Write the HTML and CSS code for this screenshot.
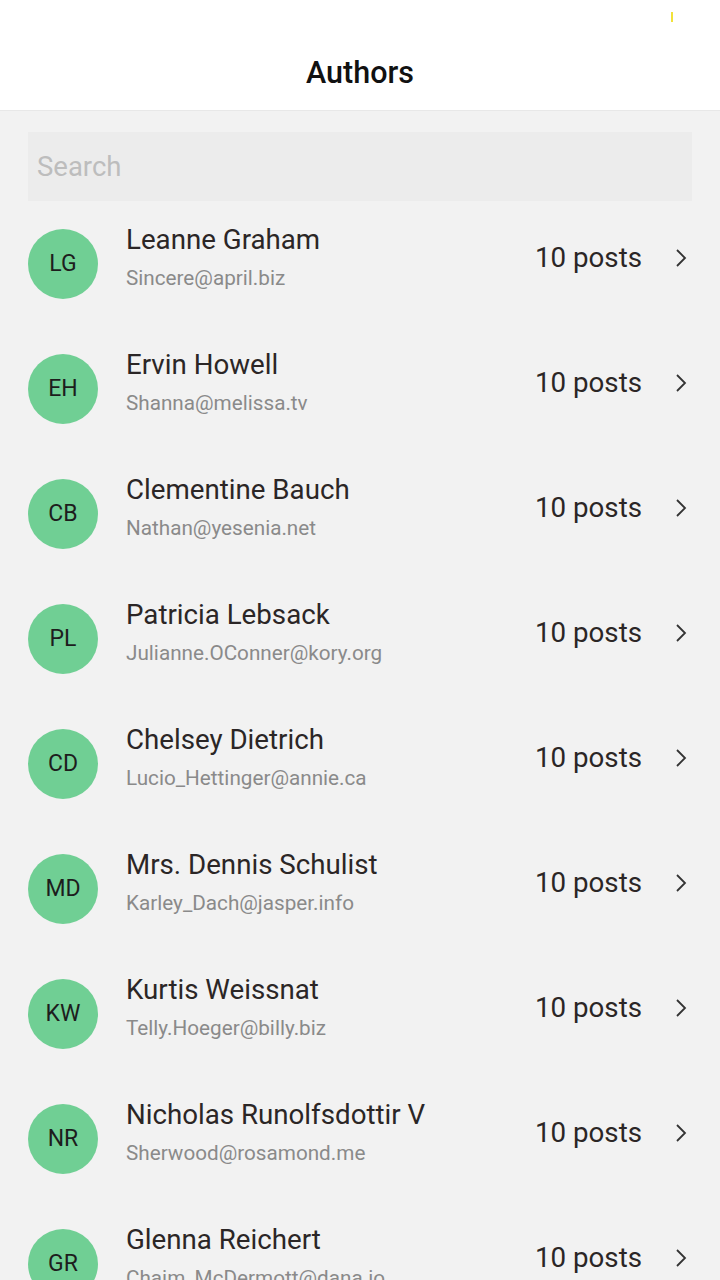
FILE: index.html
```html
<!DOCTYPE html>
<html>
<head>
<meta charset="utf-8">
<link rel="stylesheet" href="styles.css">
</head>
<body>
<div class="app">
  <header class="header">
    <span class="status-mark"></span>
    <h1 class="title">Authors</h1>
  </header>
  <main class="content">
    <div class="search"><span class="search-placeholder">Search</span></div>
    <ul class="list">
      <li class="row"><div class="avatar">LG</div><div class="info"><div class="name">Leanne Graham</div><div class="email">Sincere@april.biz</div></div><div class="posts">10 posts</div><svg class="chev" viewBox="0 0 14 20"><polyline points="3,2 11,10 3,18"/></svg></li>
      <li class="row"><div class="avatar">EH</div><div class="info"><div class="name">Ervin Howell</div><div class="email">Shanna@melissa.tv</div></div><div class="posts">10 posts</div><svg class="chev" viewBox="0 0 14 20"><polyline points="3,2 11,10 3,18"/></svg></li>
      <li class="row"><div class="avatar">CB</div><div class="info"><div class="name">Clementine Bauch</div><div class="email">Nathan@yesenia.net</div></div><div class="posts">10 posts</div><svg class="chev" viewBox="0 0 14 20"><polyline points="3,2 11,10 3,18"/></svg></li>
      <li class="row"><div class="avatar">PL</div><div class="info"><div class="name">Patricia Lebsack</div><div class="email">Julianne.OConner@kory.org</div></div><div class="posts">10 posts</div><svg class="chev" viewBox="0 0 14 20"><polyline points="3,2 11,10 3,18"/></svg></li>
      <li class="row"><div class="avatar">CD</div><div class="info"><div class="name">Chelsey Dietrich</div><div class="email">Lucio_Hettinger@annie.ca</div></div><div class="posts">10 posts</div><svg class="chev" viewBox="0 0 14 20"><polyline points="3,2 11,10 3,18"/></svg></li>
      <li class="row"><div class="avatar">MD</div><div class="info"><div class="name">Mrs. Dennis Schulist</div><div class="email">Karley_Dach@jasper.info</div></div><div class="posts">10 posts</div><svg class="chev" viewBox="0 0 14 20"><polyline points="3,2 11,10 3,18"/></svg></li>
      <li class="row"><div class="avatar">KW</div><div class="info"><div class="name">Kurtis Weissnat</div><div class="email">Telly.Hoeger@billy.biz</div></div><div class="posts">10 posts</div><svg class="chev" viewBox="0 0 14 20"><polyline points="3,2 11,10 3,18"/></svg></li>
      <li class="row"><div class="avatar">NR</div><div class="info"><div class="name">Nicholas Runolfsdottir V</div><div class="email">Sherwood@rosamond.me</div></div><div class="posts">10 posts</div><svg class="chev" viewBox="0 0 14 20"><polyline points="3,2 11,10 3,18"/></svg></li>
      <li class="row"><div class="avatar">GR</div><div class="info"><div class="name">Glenna Reichert</div><div class="email">Chaim_McDermott@dana.io</div></div><div class="posts">10 posts</div><svg class="chev" viewBox="0 0 14 20"><polyline points="3,2 11,10 3,18"/></svg></li>
    </ul>
  </main>
</div>
</body>
</html>
```
FILE: styles.css
```css
* { box-sizing: border-box; }
html, body { margin: 0; padding: 0; }
body {
  width: 720px;
  height: 1280px;
  overflow: hidden;
  background: #f2f2f2;
  font-family: Roboto, "Noto Sans", sans-serif;
}
.app { display: flex; flex-direction: column; }
.header {
  position: relative;
  height: 111px;
  background: #ffffff;
  border-bottom: 1px solid #e8e8e8;
  display: flex;
  align-items: flex-start;
  justify-content: center;
  padding-top: 53px;
}
.status-mark {
  position: absolute;
  left: 671px;
  top: 12px;
  width: 2px;
  height: 10px;
  background: #f2e23a;
}
.title {
  margin: 0;
  font-size: 30.5px;
  line-height: 40px;
  font-weight: 500;
  color: #111;
}
.content { padding: 21px 0 0; }
.search {
  margin: 0 28px;
  height: 69px;
  background: #ececec;
  display: flex;
  align-items: center;
  padding-left: 9px;
}
.search-placeholder {
  font-size: 27.5px;
  color: #bdbdbd;
}
.list { list-style: none; margin: 0; padding: 0; }
.row {
  height: 125px;
  display: flex;
  align-items: center;
  padding: 0 32px 0 28px;
}
.avatar {
  width: 70px;
  height: 70px;
  border-radius: 50%;
  background: #70cf94;
  color: #1d1d1d;
  font-size: 23px;
  display: flex;
  align-items: center;
  justify-content: center;
  flex: none;
}
.info {
  flex: 1;
  margin-left: 28px;
  margin-bottom: 14px;
  display: flex;
  flex-direction: column;
}
.name {
  font-size: 27.7px;
  line-height: 36px;
  color: #2b2626;
}
.email {
  font-size: 20.7px;
  line-height: 28px;
  margin-top: 6px;
  color: #8a8a8a;
}
.posts {
  font-size: 27.7px;
  color: #2b2626;
  margin-bottom: 12px;
  margin-right: 32px;
}
.chev {
  width: 14px;
  height: 20px;
  margin-bottom: 12px;
  fill: none;
  stroke: #333;
  stroke-width: 1.8;
}
```
